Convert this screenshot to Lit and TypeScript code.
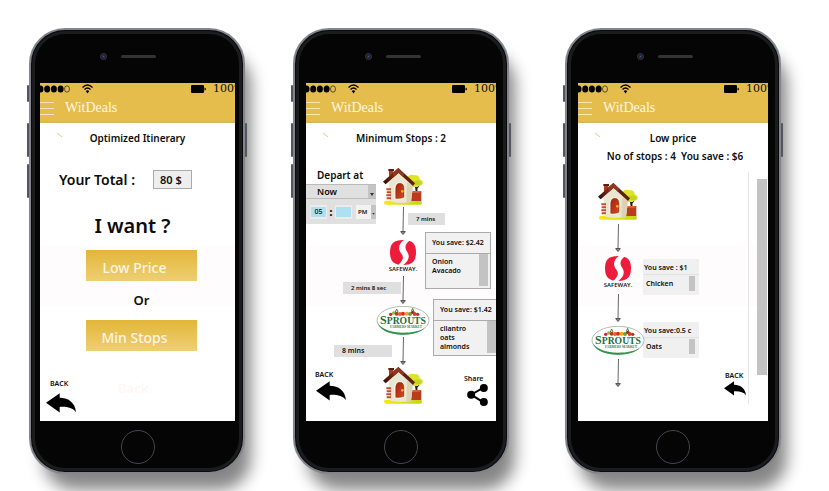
import { LitElement, html, svg, css, TemplateResult } from "lit";
import { customElement } from "lit/decorators.js";

const backIcon = html`<svg class="back-icon" viewBox="0 0 92 60" aria-hidden="true">
  <path d="M0 29 L42 0 V14 C70 14 89 29 92 58 C82 45 66 41 42 42 V59 Z" fill="#000" />
</svg>`;

const shareIcon = html`<svg class="share-icon" viewBox="0 0 62 66" aria-hidden="true">
  <path d="M49 11 L12 32 L49 55" fill="none" stroke="#000" stroke-width="6" />
  <circle cx="12" cy="32" r="12" /><circle cx="50" cy="12" r="12" /><circle cx="50" cy="54" r="12" />
</svg>`;

const downArrow = html`<svg class="leg" viewBox="0 0 8 28" aria-hidden="true">
  <path d="M4.5 0 L4 24" stroke="#666" stroke-width="1" fill="none" />
  <path d="M1.5 24.5 L4 27.5 L6.5 24.5 M2 24.5 H6" stroke="#555" stroke-width="1" fill="#888" />
</svg>`;

const house = html`<svg class="house" viewBox="0 0 120 111" role="img" aria-label="Home">
  <defs>
    <linearGradient id="roof" x1="0" y1="1" x2="1" y2="0.3">
      <stop offset="0" stop-color="#1c0804" /><stop offset=".5" stop-color="#7d2a14" /><stop offset="1" stop-color="#30100a" />
    </linearGradient>
    <linearGradient id="door" x1="0" y1="0" x2="1" y2="1">
      <stop offset="0" stop-color="#9c2412" /><stop offset="1" stop-color="#d8481d" />
    </linearGradient>
    <linearGradient id="ground"><stop offset="0" stop-color="#f7ea10" /><stop offset="1" stop-color="#c3d614" /></linearGradient>
  </defs>
  <rect x="3" y="98" width="114" height="12" rx="6" fill="url(#ground)" />
  <path d="M95 50 L99 76 L104 76 L103 62 L111 52 L101 58 Z" fill="#2a1408" />
  <path d="M72 40 C68 24 84 16 95 22 C106 19 112 28 109 33 C124 37 122 54 108 53 C98 60 84 58 78 50 Z" fill="#dde32a" />
  <path d="M92 40 C104 34 117 40 116 48 C110 55 94 52 92 46 Z" fill="#c2d422" />
  <rect x="80" y="69" width="35" height="30" fill="#b93c1e" />
  <path d="M84 69 H115 L109 74 H86 Z" fill="#d8663c" />
  <path d="M18 6 H31 V28 H18 Z" fill="#a93c20" /><path d="M16 3 H33 V9 H16 Z" fill="#5c1c0e" />
  <path d="M16 43 L48 13 L90 52 L84 102 Q52 108 23 101 Z" fill="#ebe6d2" />
  <path d="M72 42 L90 52 L84 102 L70 104 Z" fill="#dbd3b4" />
  <path d="M10 61 h14 v6 h-14z M11 70 h13 v6 h-13z M10 79 h14 v6 h-14z M11 88 h13 v6 h-13z" fill="#c64a2c" />
  <path d="M34 94 V60 Q35 42 50 42 Q67 42 67 60 V90 L54 96 Z" fill="#f8f3e2" />
  <path d="M38 91 V62 Q39 46 50 46 Q63 46 63 62 V88 Q50 93 38 91 Z" fill="url(#door)" stroke="#7c1b0b" stroke-width="1" />
  <circle cx="58" cy="70" r="4" fill="#f2b51f" />
  <path d="M0 41 L46 0 L96 46 L90 54 L47 15 L8 49 Z" fill="url(#roof)" />
  <path d="M28 16 L46 0 L64 17 L60 26 L47 14 L34 25 Z" fill="#8d3820" />
</svg>`;

const safeway = html`<div class="safeway">
  <svg class="safeway-mark" viewBox="0 0 78 75" aria-hidden="true">
    <path d="M39 0 C66 0 78 10 78 37 C78 64 66 75 39 75 C12 75 0 64 0 37 C0 10 12 0 39 0 Z" fill="#ee1c3c" />
    <path d="M46 -3 L60 1 C46 12 43 22 50 33 C61 48 58 62 36 78 L24 76 C42 58 42 50 32 38 C22 24 28 8 46 -3 Z" fill="#fff" />
  </svg>
  <span class="safeway-name">SAFEWAY.</span>
</div>`;

const veg = [
  [42, 25, 5, "#d3202b"], [51, 21, 5, "#8ac03c"], [60, 23, 6, "#b63a2a"], [70, 24, 6, "#e8602d"],
  [79, 23, 6, "#dc2b24"], [90, 23, 6, "#f1a31f"], [100, 24, 6, "#69a63a"], [108, 19, 5, "#8c2a20"],
  [114, 24, 6, "#e03a22"], [123, 25, 5, "#c02a24"],
] as const;

const sprouts = html`<svg class="sprouts" viewBox="0 0 158 87" role="img" aria-label="Sprouts Farmers Market">
  <ellipse cx="79" cy="43" rx="78" ry="42" fill="#fff" stroke="#8d9a8d" stroke-width="2" />
  <path d="M3 52 C14 78 48 86 79 86 C106 86 130 80 144 66 C126 76 108 80 79 80 C44 80 16 70 3 52 Z" fill="#2c9448" />
  ${veg.map(([x, y, r, c]) => svg`<circle cx=${x} cy=${y} r=${r} fill=${c} />`)}
  <path d="M56 18 L60 9 L64 18 M104 16 L108 7 L112 18" stroke="#56802c" stroke-width="3" fill="none" />
  <text x="79" y="55" text-anchor="middle" class="sprouts-name"><tspan class="sprouts-cap">S</tspan>PROUTS</text>
  <text x="88" y="66" text-anchor="middle" class="sprouts-sub">FARMERS MARKET</text>
</svg>`;

const backButton = html`<button class="tool back" type="button"><span>BACK</span>${backIcon}</button>`;

@customElement("app-root")
export class AppRoot extends LitElement {
  static styles = css`
    :host {
      display: block;
      background: #fff;
      color: #0c0c0c;
      font-family: "Noto Sans", "Open Sans", sans-serif;
      font-weight: 600;
    }
    * { box-sizing: border-box; }
    button, input, select { font: inherit; color: inherit; border: 0; margin: 0; padding: 0; background: none; }
    h1, h2, p, ul { margin: 0; padding: 0; font: inherit; list-style: none; }
    svg { display: block; flex: none; }

    .showcase { display: grid; grid-template-columns: 264fr 272fr 293fr; padding: 28px 0 17px; }
    .cell { padding-left: 29px; }

    .phone {
      position: relative;
      display: flex;
      flex-direction: column;
      width: 216px;
      padding: 0 11px;
      border-radius: 36px;
      background: #050505;
      border: 2px solid #84848c;
      box-shadow: inset 0 0 0 1px #0a0a0b, inset 0 0 0 4px #1a1c1e, 10px 20px 16px -4px rgba(0, 0, 0, 0.48);
    }
    .phone.wide { padding: 0 8px 0 9px; }
    .side { position: absolute; width: 2px; background: #55555d; border-radius: 1px; }
    .mute { left: -4px; top: 55px; height: 17px; }
    .up { left: -4px; top: 93px; height: 34px; }
    .down { left: -4px; top: 134px; height: 34px; }
    .power { right: -4px; top: 93px; height: 34px; }
    .ear { display: flex; align-items: center; gap: 14px; height: 53px; padding-left: 59px; }
    .wide .ear { padding-left: 60px; }
    .camera { width: 7px; height: 7px; border-radius: 50%; background: radial-gradient(#33509a, #16161f 60%); border: 1px solid #3a3a42; }
    .speaker { width: 35px; height: 3px; border-radius: 2px; background: #333; }
    .chin { display: flex; align-items: center; justify-content: center; height: 51px; }
    .home { width: 34px; height: 34px; border-radius: 50%; border: 1px solid #45454e; }

    .screen {
      display: flex;
      flex-direction: column;
      min-height: 338px;
      overflow: hidden;
      background: linear-gradient(#fff 48%, #fffcfd 48%, #fffcfd 66%, #fff 66%);
    }
    .bar { background: #e4bd4d; border-bottom: 2px solid #d9b761; }
    .status { display: flex; align-items: center; height: 12px; }
    .dots { width: 30px; height: 8px; }
    .wifi { width: 11px; height: 10px; margin-left: 12px; }
    .battery { width: 15px; height: 8px; margin-left: auto; }
    .percent { width: 22px; margin-left: 7px; overflow: hidden; font: 11px/12px "DejaVu Serif", serif; }
    .brand { display: flex; align-items: center; gap: 11px; height: 26px; }
    .menu { display: flex; flex-direction: column; gap: 5px; width: 14px; }
    .menu i { height: 1px; background: #f6e6b8; }
    .brand h1 { color: #fff6e0; font: 14px/18px "Liberation Serif", serif; }

    .heading { display: grid; grid-template-columns: 17px 6px 1fr 23px; align-items: center; height: 16px; margin-top: 7px; }
    .tick { grid-column: 2; width: 6px; height: 8px; align-self: start; }
    .heading h2 { grid-column: 1 / -1; grid-row: 1; text-align: center; font-size: 10px; line-height: 16px; }
    .heading .tick { grid-row: 1; }

    .total { display: flex; align-items: center; gap: 18px; height: 26px; margin-top: 20px; padding-left: 19px; font-size: 14px; white-space: nowrap; }
    .total input { width: 39px; height: 19px; padding: 1px 0 0 6px; background: #eee; border: 1px solid #aaa; font-size: 11px; }
    .want { margin: 20px 10px 10px 0; text-align: center; font-size: 20px; line-height: 28px; }
    .choices { display: flex; flex-direction: column; gap: 10px; padding: 0 38px 0 46px; }
    .choice { height: 31px; padding: 4px 14px 0 0; background: linear-gradient(#e2b638, #efcf74); color: #fbf5e4; font-size: 14px; font-weight: 500; }
    .or { text-align: center; font-size: 13px; line-height: 19px; }
    .tool { display: flex; flex-direction: column; align-items: flex-start; font-size: 7px; line-height: 10px; }
    .foot { display: flex; align-items: flex-start; gap: 42px; margin-top: auto; padding: 0 0 8px 6px; }
    .foot .tool span { padding-left: 4px; }
    .back-icon { width: 30px; height: 20px; margin-top: 4px; }
    .ghost { color: #fff6f6; font-size: 13px; line-height: 18px; }

    .trip { display: grid; grid-template-columns: 70px 26px 6px 22px 1fr; padding-top: 22px; }
    .plan { grid-area: 1 / 1 / 2 / 3; display: flex; flex-direction: column; }
    .route { z-index: 1; display: flex; flex-direction: column; align-items: center; width: 54px; gap: 2px; }
    .trip .route { grid-area: 1 / 2 / 2 / 5; }
    .deals { grid-area: 1 / 4 / 2 / 6; display: flex; flex-direction: column; align-items: flex-start; }
    .leg { width: 8px; height: 28px; }
    .house { width: 40px; height: 37px; }
    .safeway { display: flex; flex-direction: column; align-items: center; height: 34px; }
    .trip .safeway { margin-top: 3px; }
    .safeway-mark { width: 26px; height: 25px; }
    .safeway-name { font: 600 6px/8px "Open Sans", sans-serif; }
    .sprouts { width: 54px; height: 29px; }
    .sprouts-name { font: bold 29px "Liberation Serif", serif; fill: #1f6d37; }
    .sprouts-cap { font-size: 36px; }
    .sprouts-sub { font: bold 10px "Liberation Serif", serif; fill: #2d8146; }

    .depart { padding: 0 0 0 11px; font-size: 10px; line-height: 14px; }
    .when { display: flex; flex-direction: column; width: 70px; height: 40px; margin-top: 2px; background: #e0e0e0; border-top: 1px solid #bbb; }
    .picker { position: relative; display: flex; }
    .picker select { appearance: none; width: 100%; }
    .picker svg { position: absolute; right: 0; bottom: 0; top: 0; width: 8px; height: 100%; background: #c4c4c4; pointer-events: none; }
    .day { height: 14px; border-bottom: 1px solid #bbb; }
    .day select { padding-left: 11px; font-size: 9px; line-height: 13px; }
    .clock { display: flex; align-items: center; height: 25px; padding-left: 4px; }
    .clock input { width: 17px; height: 14px; border: 1px solid #ececec; border-width: 2px 1px; background: #ade0f0; text-align: center; font-size: 7px; font-weight: 500; }
    .clock b { width: 8px; text-align: center; font-size: 10px; line-height: 12px; }
    .half { width: 20px; height: 14px; margin-left: auto; background: #f2f2f2; }
    .half select { padding-left: 2px; font-size: 6px; }
    .half svg { width: 5px; }
    .time { width: 58px; height: 12px; padding-left: 8px; background: #dfdfdf; font-size: 6px; line-height: 12px; white-space: nowrap; }
    .time.large { font-size: 7px; }
    .time.narrow { width: 37px; margin-top: 45px; }
    .second { margin: 58px 0 0 37px; }
    .third { margin: 51px 0 0 28px; }
    .plan .back { margin: 13px 0 0 9px; }
    .plan .back-icon { margin: 1px 0 0 1px; }
    .card { font-size: 7px; line-height: 9px; }
    .card h3 { margin: 0; font: inherit; white-space: nowrap; }
    .card .list { display: flex; justify-content: space-between; }
    .thumb { background: #c3c3c3; }
    .deals .card { width: 66px; margin: 7px 0 0 17px; border: 1px solid #aaa; background: #f1f1f1; }
    .deals .card + .card { margin: 10px 0 0 25px; }
    .deals h3 { padding: 5px 0 6px 6px; border-bottom: 1px solid #aaa; }
    .deals .list { height: 34px; padding-right: 2px; }
    .deals ul { padding: 3px 0 0 6px; }
    .deals .thumb { width: 9px; height: 32px; }
    .share { align-self: flex-end; margin: 18px 8px 0 0; }
    .share-icon { width: 21px; height: 22px; margin-left: 3px; }

    .summary { margin: 2px 0 0 4px; text-align: center; font-size: 10px; line-height: 16px; white-space: pre; }
    .scroller { display: flex; gap: 8px; padding-top: 8px; }
    .stops { display: flex; width: 171px; height: 232px; padding: 11px 0 0 13px; border-right: 1px solid #e6e6e6; }
    .stops .route { gap: 4px; }
    .track { width: 10px; height: 196px; margin-top: 7px; }
    .savings { display: flex; flex: 1; flex-direction: column; padding-top: 76px; margin-left: -2px; }
    .savings .card { width: 56px; height: 36px; margin-bottom: 27px; background: #f0f0f0; }
    .savings h3 { padding: 4px 0 2px 1px; border-bottom: 1px solid #e2e2e2; }
    .savings .list { padding: 1px 4px 0 3px; }
    .savings ul { padding-top: 3px; }
    .savings .thumb { width: 6px; height: 15px; }
    .savings .back { align-self: flex-end; margin: -14px 2px 0 0; }
    .savings .back span { padding-left: 1px; }
    .savings .back-icon { width: 22px; height: 15px; margin-top: 0; }
  `;

  private bar() {
    return html`<header class="bar">
      <div class="status">
        <svg class="dots" viewBox="0 0 30 8" aria-hidden="true">
          ${[0.5, 7.2, 13.9, 20.6].map((x) => svg`<ellipse cx=${x} cy="4" rx="3" ry="3.6" />`)}
          <ellipse cx="27" cy="4" rx="2.5" ry="3.2" fill="none" stroke="#222" stroke-width=".7" />
        </svg>
        <svg class="wifi" viewBox="0 0 22 20" fill="none" stroke="#000" stroke-width="2.6" aria-hidden="true">
          <path d="M1 7 Q11 -3 21 7 M5 11 Q11 5 17 11" /><path d="M7.5 14 Q11 11 14.5 14 L11 19 Z" fill="#000" stroke="none" />
        </svg>
        <svg class="battery" viewBox="0 0 15 8" aria-hidden="true">
          <rect width="13" height="8" rx="1" /><path d="M13.5 2.5 Q15 3 15 4 Q15 5 13.5 5.5 Z" />
        </svg>
        <span class="percent">100%</span>
      </div>
      <div class="brand">
        <button class="menu" type="button" aria-label="Menu"><i></i><i></i><i></i></button>
        <h1>WitDeals</h1>
      </div>
    </header>`;
  }

  private heading(text: string) {
    return html`<div class="heading">
      <svg class="tick" viewBox="0 0 6 8" aria-hidden="true"><path d="M0 3 L5 7" stroke="#ecc965" stroke-width="1" /></svg>
      <h2>${text}</h2>
    </div>`;
  }

  private card(save: string, items: string[]) {
    return html`<section class="card">
      <h3>${save}</h3>
      <div class="list"><ul>${items.map((i) => html`<li>${i}</li>`)}</ul><div class="thumb"></div></div>
    </section>`;
  }

  private phone(kind: string, content: TemplateResult) {
    return html`<div class="cell"><article class="phone ${kind}">
      <i class="side mute"></i><i class="side up"></i><i class="side down"></i><i class="side power"></i>
      <div class="ear"><i class="camera"></i><i class="speaker"></i></div>
      <div class="screen">${this.bar()}${content}</div>
      <div class="chin"><button class="home" type="button" aria-label="Home"></button></div>
    </article></div>`;
  }

  private caret() {
    return html`<svg viewBox="0 0 8 13" aria-hidden="true"><path d="M2 8 H6 L4 11 Z" fill="#333" /></svg>`;
  }

  render() {
    return html`<main class="showcase">
      ${this.phone("wide", html`
        ${this.heading("Optimized Itinerary")}
        <div class="total"><label for="total">Your Total :</label><input id="total" readonly .value=${"80 $"} /></div>
        <p class="want">I want ?</p>
        <div class="choices">
          <button class="choice" type="button">Low Price</button>
          <span class="or">Or</span>
          <button class="choice" type="button">Min Stops</button>
        </div>
        <div class="foot">${backButton}<span class="ghost">Back</span></div>
      `)}
      ${this.phone("", html`
        ${this.heading("Minimum Stops : 2")}
        <div class="trip">
          <div class="plan">
            <label class="depart" for="day">Depart at</label>
            <div class="when">
              <div class="picker day"><select id="day"><option>Now</option></select>${this.caret()}</div>
              <div class="clock">
                <input aria-label="Hour" .value=${"05"} /><b>:</b><input aria-label="Minute" />
                <div class="picker half"><select aria-label="AM or PM"><option>PM</option></select>${this.caret()}</div>
              </div>
            </div>
            <span class="time second">2 mins 8 sec</span>
            <span class="time large third">8 mins</span>
            ${backButton}
          </div>
          <div class="route">${house}${downArrow}${safeway}${downArrow}${sprouts}${downArrow}${house}</div>
          <div class="deals">
            <span class="time narrow">7 mins</span>
            ${this.card("You save: $2.42", ["Onion", "Avacado"])}
            ${this.card("You save: $1.42", ["cilantro", "oats", "almonds"])}
            <button class="tool share" type="button"><span>Share</span>${shareIcon}</button>
          </div>
        </div>
      `)}
      ${this.phone("", html`
        ${this.heading("Low price")}
        <p class="summary">No of stops : 4  You save : $6</p>
        <div class="scroller">
          <div class="stops">
            <div class="route">${house}${downArrow}${safeway}${downArrow}${sprouts}${downArrow}</div>
            <div class="savings">
              ${this.card("You save : $1", ["Chicken"])}
              ${this.card("You save:0.5 c", ["Oats"])}
              ${backButton}
            </div>
          </div>
          <div class="thumb track"></div>
        </div>
      `)}
    </main>`;
  }
}
